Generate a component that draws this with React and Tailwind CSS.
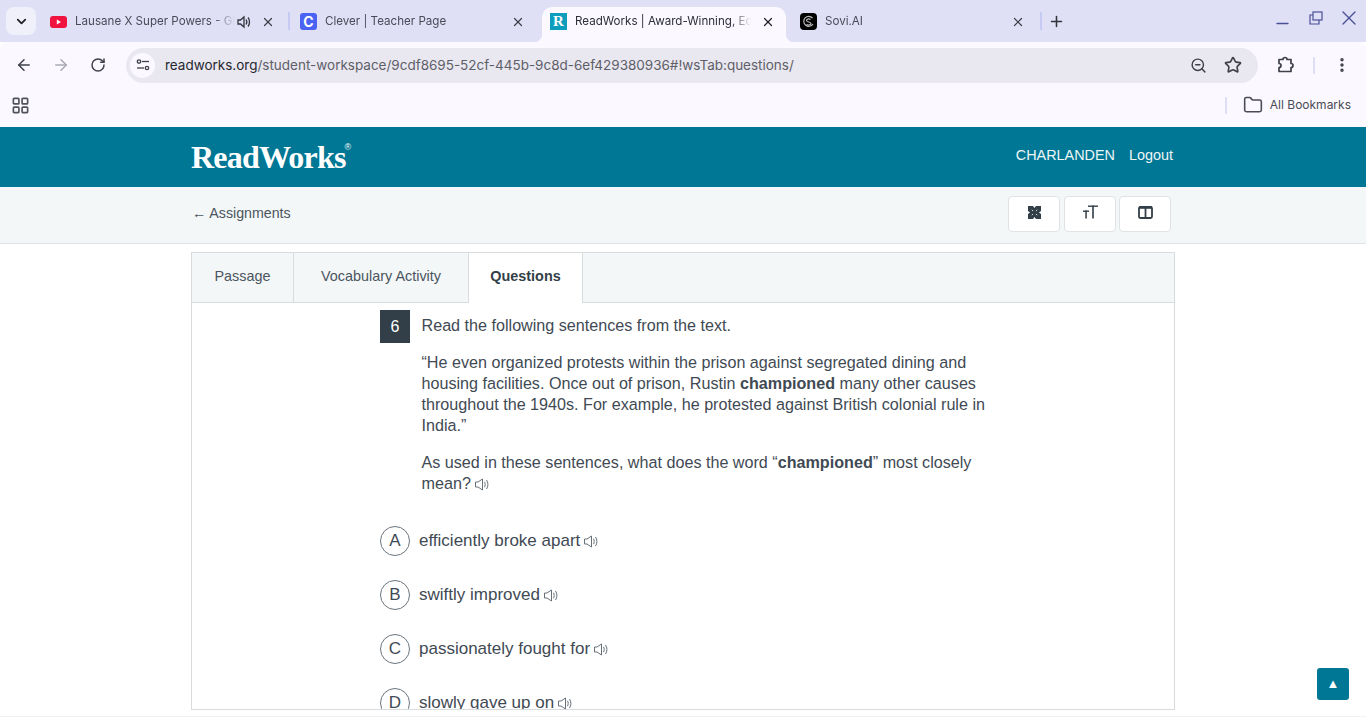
import { ArrowLeft, ArrowRight, RotateCw, ZoomOut, Star, EllipsisVertical, Folder, X, Plus, Minus, ChevronDown, LayoutGrid } from 'lucide-react';

function Speaker() {
  return (
    <svg width="15" height="13" viewBox="0 0 15 13" fill="none" stroke="#67717a" strokeWidth="1" className="inline-block shrink-0">
      <path d="M.5 4h2.500L7.500 1v11L3 9H.5z" strokeLinejoin="round" />
      <path d="M9.500 3.800c.9 1.500.9 3.900 0 5.400" />
      <path d="M11.500 2c1.900 2.600 1.900 6.400 0 9" />
    </svg>
  );
}

function YoutubeIcon() {
  return (
    <svg width="17" height="12" viewBox="0 0 17 12" className="shrink-0">
      <rect width="17" height="12" rx="3" fill="#f0123f" />
      <path d="M6.800 3.500v5l4.200-2.500z" fill="#fff" />
    </svg>
  );
}

function CleverIcon() {
  return (
    <div className="w-[17px] h-[17px] shrink-0 rounded-[3px] bg-[#4a63f2] flex items-center justify-center text-white font-bold text-[14px] leading-none">C</div>
  );
}

function ReadWorksIcon() {
  return (
    <div className="w-[17px] h-[17px] shrink-0 bg-[#0f9dbd] flex items-center justify-center text-white font-bold text-[15px] leading-none font-['Liberation_Serif',serif]">R</div>
  );
}

function SoviIcon() {
  return (
    <div className="w-[17px] h-[17px] shrink-0 rounded-[4px] bg-black flex items-center justify-center">
      <svg width="13" height="13" viewBox="0 0 13 13" fill="none" stroke="#b8b8b8" strokeWidth="1.200">
        <path d="M10.500 3A5 5 0 1 0 11 9" />
        <path d="M8.500 4.500C7 3.500 4.500 4 4.500 5.500S9 7 9 8.500 6 10.500 4.500 9.500" />
      </svg>
    </div>
  );
}

function TabSep() {
  return <div className="w-[2px] h-[18px] bg-[#c5cbf3] shrink-0" />;
}

function BrowserTab({ icon, title, active, speaker, width }) {
  return (
    <div className={`relative flex items-center h-[35px] mt-[7px] pl-2 pb-[9px] pt-[3px] shrink-0 ${width} ${active ? 'bg-[#fbf9ff] rounded-t-[10px]' : ''}`}>
      {active && (
        <>
          <div className="absolute -left-2 bottom-0 w-2 h-2 bg-[radial-gradient(circle_at_0_0,transparent_8px,#fbf9ff_8.500px)]" />
          <div className="absolute -right-2 bottom-0 w-2 h-2 bg-[radial-gradient(circle_at_100%_0,transparent_8px,#fbf9ff_8.500px)]" />
        </>
      )}
      {icon}
      <div className={`ml-2 overflow-hidden whitespace-nowrap text-[11.600px] ${active ? 'text-[#2d2e36]' : 'text-[#4a4b57]'} ${speaker ? 'w-[160px]' : 'w-[176px]'} [mask-image:linear-gradient(to_left,transparent,black_20px)]`}>
        {title}
      </div>
      {speaker && <svg width="16" height="16" viewBox="0 0 16 16" fill="none" stroke="#33343c" strokeWidth="1.300" className="ml-[1px] shrink-0"><path d="M2 6h2.500L8 3v10L4.500 10H2z" /><path d="M10 5.500c1 1.500 1 3.500 0 5" /><path d="M12 3.500c2 2.500 2 6.500 0 9" /></svg>}
      <X size={14} strokeWidth={2.100} color={active ? '#1f2026' : '#3d3e48'} className={speaker ? 'ml-[9px] shrink-0' : 'ml-[10px] shrink-0'} />
    </div>
  );
}

function ExpandIcon() {
  return (
    <svg width="13" height="13" viewBox="0 0 13 13">
      <rect width="13" height="13" fill="#333f48" />
      <path d="M5 0h3L6.500 2zM5 13h3l-1.500-2zM0 5v3l2-1.500zM13 5v3l-2-1.500z" fill="#fff" />
      <path d="M3.800 3.800L5 5M9.200 3.800L8 5M3.800 9.200L5 8M9.200 9.200L8 8" stroke="#d5dadd" strokeWidth="1" />
    </svg>
  );
}

function TextHeightIcon() {
  return (
    <svg width="15" height="14" viewBox="0 0 15 14" fill="#333f48">
      <rect x="5" y="0.500" width="10" height="1.400" />
      <rect x="9.200" y="0.500" width="1.600" height="13" />
      <rect x="0" y="5.500" width="6" height="1.400" />
      <rect x="2.300" y="5.500" width="1.500" height="8" />
    </svg>
  );
}

function ColumnsIcon() {
  return (
    <svg width="15" height="13" viewBox="0 0 15 13" fill="none" stroke="#333f48">
      <rect x="1" y="1" width="13" height="11" rx="1.500" strokeWidth="1.800" />
      <path d="M1 1.500h13" strokeWidth="2.600" />
      <path d="M7.500 1v11" strokeWidth="1.800" />
    </svg>
  );
}

function ToolButton({ children, className }) {
  return (
    <button className={`w-[52px] h-[36px] bg-white border border-[#dfe3e6] rounded-[4px] flex items-center justify-center pb-[3px] ${className || ''}`}>
      {children}
    </button>
  );
}

const answers = [
  { letter: 'A', text: 'efficiently broke apart' },
  { letter: 'B', text: 'swiftly improved' },
  { letter: 'C', text: 'passionately fought for' },
  { letter: 'D', text: 'slowly gave up on' },
];

export default function App() {
  return (
    <div className="relative w-[1366px] h-[717px] overflow-hidden bg-white flex flex-col font-['Liberation_Sans',sans-serif]">
      {/* browser tab strip */}
      <div className="h-[42px] bg-[#dfe0f6] flex items-start shrink-0 font-['Inter',sans-serif]">
        <div className="w-[30px] h-[28px] mt-[7px] ml-[6px] mr-[6px] bg-[#f0f0fb] rounded-[8px] flex items-center justify-center shrink-0">
          <ChevronDown size={15} strokeWidth={2.800} color="#1f2026" />
        </div>
        <BrowserTab icon={<YoutubeIcon />} title="Lausane X Super Powers - Glimpse" speaker width="w-[246px]" />
        <div className="mt-[12px] mr-[2px]"><TabSep /></div>
        <BrowserTab icon={<CleverIcon />} title="Clever | Teacher Page" width="w-[250px]" />
        <BrowserTab icon={<ReadWorksIcon />} title="ReadWorks | Award-Winning, Edtech" active width="w-[244px]" />
        <div className="w-[6px]" />
        <BrowserTab icon={<SoviIcon />} title="Sovi.AI" width="w-[248px]" />
        <div className="mt-[12px]"><TabSep /></div>
        <Plus size={17} strokeWidth={2.200} color="#33343c" className="mt-[13px] ml-[6px] shrink-0" />
        <div className="flex-1" />
        <div className="flex items-start mr-[5px] text-[#4b4f96]">
          <Minus size={19} strokeWidth={1.600} className="mt-[14px]" />
          <svg width="14" height="14" viewBox="0 0 14 14" fill="none" stroke="currentColor" strokeWidth="1.200" className="ml-[17px] mt-[11px]">
            <rect x="4" y="1" width="9" height="8" />
            <path d="M4 4H1v9h9V9" />
          </svg>
          <X size={24} strokeWidth={1.400} className="ml-[14px] mt-[6px]" />
        </div>
      </div>

      {/* address bar */}
      <div className="h-[46px] bg-[#fbf9ff] rounded-t-[8px] flex items-center shrink-0 font-['Inter',sans-serif] pl-[15px]">
        <ArrowLeft size={18} strokeWidth={2} color="#3f4048" className="shrink-0" />
        <ArrowRight size={18} strokeWidth={2} color="#a9a9b2" className="ml-[19px] shrink-0" />
        <RotateCw size={16} strokeWidth={2.200} color="#3f4048" className="ml-[20px] shrink-0" />
        <div className="ml-[20px] w-[1132px] h-[35px] bg-[#e9e7f0] rounded-full flex items-center shrink-0">
          <div className="w-[25px] h-[25px] ml-[4px] bg-[#fbf9ff] rounded-full flex items-center justify-center shrink-0">
            <svg width="14" height="12" viewBox="0 0 14 12" fill="none" stroke="#3f4048" strokeWidth="1.300">
              <circle cx="3" cy="2.500" r="1.700" />
              <path d="M6 2.500h7" />
              <circle cx="11" cy="9" r="1.700" />
              <path d="M1 9h7" />
            </svg>
          </div>
          <div className="ml-[10px] pt-[1px] text-[13.490px] text-[#5e5f68] whitespace-nowrap"><span className="text-[#26272e]">readworks.org</span>/student-workspace/9cdf8695-52cf-445b-9c8d-6ef429380936#!wsTab:questions/</div>
          <div className="flex-1" />
          <ZoomOut size={17} strokeWidth={2} color="#3f4048" className="shrink-0" />
          <Star size={18} strokeWidth={2.200} color="#3f4048" className="ml-[17px] mr-[16px] shrink-0" />
        </div>
        <svg width="18" height="18" viewBox="0 0 18 18" fill="none" stroke="#3f4048" strokeWidth="1.700" strokeLinejoin="round" className="ml-[19px] shrink-0">
          <path d="M2 3.500H6a2 2 0 0 1 4 0H14V7.500a2 2 0 0 1 0 4V15.500H2V11.500a2 2 0 0 0 0-4z" />
        </svg>
        <div className="w-[2px] h-[17px] bg-[#dcdff7] ml-[18px] shrink-0" />
        <EllipsisVertical size={18} strokeWidth={2.600} color="#3f4048" className="ml-[18px] shrink-0" />
      </div>

      {/* bookmarks bar */}
      <div className="h-[39px] bg-[#fbf9ff] flex items-center shrink-0 font-['Inter',sans-serif] pb-[5px]">
        <LayoutGrid size={19} strokeWidth={2.100} color="#50515a" className="ml-[11px] shrink-0" />
        <div className="flex-1" />
        <div className="w-[2px] h-[17px] bg-[#dcdff7] shrink-0" />
        <Folder size={20} strokeWidth={1.900} color="#4a4b55" className="ml-[16px] shrink-0" />
        <div className="ml-[7px] mr-[15px] text-[12px] text-[#4a4b55]">All Bookmarks</div>
      </div>

      {/* site header */}
      <div className="h-[60px] bg-[#007794] shrink-0">
        <div className="w-[984px] mx-auto flex items-center h-full">
          <div className="flex items-start text-white">
            <span className="font-['Liberation_Serif',serif] font-bold text-[32px] leading-none tracking-[-0.800px]">ReadWorks</span>
            <span className="text-[9px] leading-none -ml-[1px] mt-[2px]">®</span>
          </div>
          <div className="flex-1" />
          <div className="flex items-center gap-[14px] text-[14.400px] text-[#eef6f8] pr-[2px] pb-[3px]">
            <span>CHARLANDEN</span>
            <span>Logout</span>
          </div>
        </div>
      </div>

      {/* sub header */}
      <div className="h-[57px] bg-[#f4f7f8] border-b border-[#e0e3e5] shrink-0">
        <div className="w-[984px] mx-auto flex items-center h-full">
          <span className="text-[14.200px] text-[#4a555e] pb-[3px] pl-[1px]">← Assignments</span>
          <div className="flex-1" />
          <div className="flex items-center gap-[3px] pr-[4px] pb-[3px]">
            <ToolButton className="mr-[1px]"><ExpandIcon /></ToolButton>
            <ToolButton><TextHeightIcon /></ToolButton>
            <ToolButton><ColumnsIcon /></ToolButton>
          </div>
        </div>
      </div>

      {/* tabs + question panel */}
      <div className="w-[984px] mx-auto mt-[8px] h-[458px] border border-[#d9dcde] overflow-hidden shrink-0">
        <div className="h-[50px] bg-[#f4f7f8] border-b border-[#d9dcde] flex text-[14.400px] text-[#4a555e]">
          <div className="w-[102px] border-r border-[#d9dcde] flex items-center justify-center pb-[2px]">Passage</div>
          <div className="w-[174px] flex items-center justify-center pb-[2px]">Vocabulary Activity</div>
          <div className="w-[115px] h-[50px] bg-white border-l border-r border-[#d9dcde] flex items-center justify-center font-bold text-[#333f48] pb-[2px]">Questions</div>
        </div>

        <div className="pl-[188px] pt-[7px] text-[#3f4a54]">
          <div className="flex">
            <div className="w-[30px] h-[33px] bg-[#333f48] text-white flex items-center justify-center text-[16px] shrink-0">6</div>
            <div className="ml-[11.500px] w-[572px] text-[16.150px] leading-[21px]">
              <p className="mt-[5px]">Read the following sentences from the text.</p>
              <p className="mt-[16px]">“He even organized protests within the prison against segregated dining and housing facilities. Once out of prison, Rustin <b>championed</b> many other causes throughout the 1940s. For example, he protested against British colonial rule in India.”</p>
              <p className="mt-[16px]">As used in these sentences, what does the word “<b>championed</b>” most closely mean? <Speaker /></p>
            </div>
          </div>
          <div className="mt-[32px] flex flex-col gap-[24px]">
            {answers.map((a) => (
              <div key={a.letter} className="flex items-center h-[30px]">
                <div className="w-[30px] h-[30px] rounded-full border border-[#6b757d] flex items-center justify-center text-[17px] shrink-0">{a.letter}</div>
                <span className="ml-[9px] text-[17px]">{a.text}</span>
                <span className="ml-[4px] flex"><Speaker /></span>
              </div>
            ))}
          </div>
        </div>
      </div>

      <div className="flex-1" />
      <div className="h-px bg-[#f2f2f2] shrink-0" />

      {/* back to top floats over page */}
      <button className="absolute left-[1317px] top-[668px] w-[32px] h-[32px] rounded-[3px] bg-[#007794] text-white text-[13px] flex items-center justify-center">▲</button>
    </div>
  );
}
